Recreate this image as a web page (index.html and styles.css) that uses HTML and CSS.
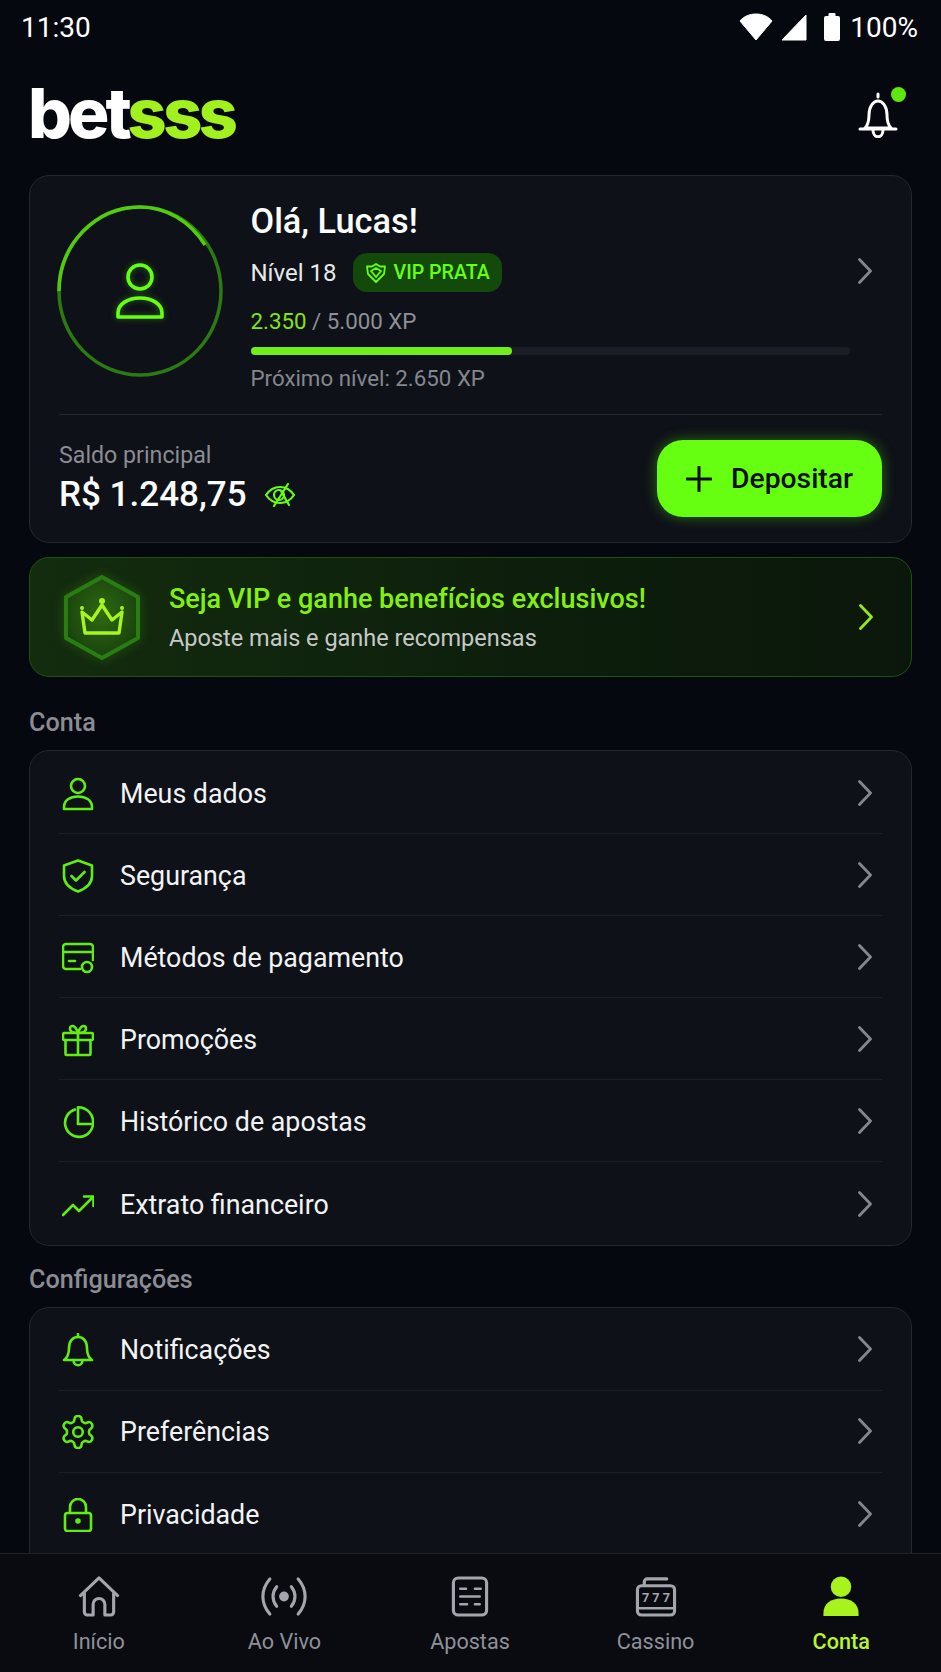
FILE: index.html
```html
<!DOCTYPE html>
<html lang="pt-BR">
<head>
    <meta charset="UTF-8">
    <meta name="viewport" content="width=device-width, initial-scale=1.0">
    <title>Betsss - Conta</title>
    <link rel="stylesheet" href="styles.css">
</head>
<body>
    <div class="screen">
        <main class="content">
            <!-- Status bar -->
            <div class="status-bar">
                <span class="status-time">11:30</span>
                <div class="status-icons">
                    <svg class="wifi" viewBox="0 0 34 28"><path d="M17 1c6 0 12 2 16 7L17 27 1 8c4-5 10-7 16-7z" fill="#fff" stroke="#fff" stroke-linejoin="round"/></svg>
                    <svg class="signal" viewBox="0 0 26 27"><path d="M25 1v25H1z" fill="#fff" stroke="#fff" stroke-linejoin="round"/></svg>
                    <svg class="battery" viewBox="0 0 18 28"><path d="M6.500 0h5a1 1 0 0 1 1 1v2H15a2 2 0 0 1 2 2v21a2 2 0 0 1-2 2H3a2 2 0 0 1-2-2V5a2 2 0 0 1 2-2h2.500V1a1 1 0 0 1 1-1z" fill="#fff"/></svg>
                    <span class="status-pct">100%</span>
                </div>
            </div>

            <!-- Header -->
            <header class="top-header">
                <div class="logo">bet<span>sss</span></div>
                <div class="bell-wrap">
                    <svg class="bell" viewBox="0 0 40 46" fill="none" stroke="#fff" stroke-width="3" stroke-linecap="round" stroke-linejoin="round">
                        <path d="M20 2v3M7 36c3-3 4-6 4-13 0-8 4-14 9-14s9 6 9 14c0 7 1 10 4 13z"/>
                        <path d="M2 37h36"/>
                        <path d="M15 38c0 9 10 9 10 0"/>
                    </svg>
                    <span class="bell-dot"></span>
                </div>
            </header>

            <!-- Profile card -->
            <section class="card profile-card">
                <div class="profile">
                    <div class="avatar">
                        <svg class="avatar-ring" viewBox="0 0 166 172" fill="none">
                            <ellipse cx="83" cy="86" rx="81" ry="84" stroke="#2c7a12" stroke-width="3.5"/>
                            <path d="M2 86C2 40 38 2 83 2c26 0 50 14 65 38" stroke="#52cc10" stroke-width="3.5"/>
                        </svg>
                        <svg class="avatar-person" viewBox="0 0 48 56" fill="none" stroke="#66ff11" stroke-width="3.6" stroke-linejoin="round">
                            <circle cx="24" cy="14" r="12"/>
                            <path d="M2 54v-4c0-9 10-15 22-15s22 6 22 15v4z"/>
                        </svg>
                    </div>
                    <div class="profile-info">
                        <h1 class="greeting">Olá, Lucas!</h1>
                        <div class="level-row">
                            <span class="level">Nível 18</span>
                            <span class="vip-badge">
                                <svg viewBox="0 0 22 22" fill="none" stroke="#66ff11" stroke-width="1.8" stroke-linejoin="round">
                                    <path d="M11 2l4 2.500h5l-1 7.500-8 8-8-8-1-7.500h5z"/>
                                    <path d="M6 9l5 6 5-6-5-3z"/>
                                </svg>
                                VIP PRATA
                            </span>
                        </div>
                        <div class="xp"><span class="xp-now">2.350</span> / 5.000 XP</div>
                        <div class="xp-bar"><div class="xp-fill" style="width: 43.6%"></div></div>
                        <div class="xp-next">Próximo nível: 2.650 XP</div>
                    </div>
                    <svg class="chevron profile-chevron" viewBox="0 0 14 26"><path d="M1.500 1.500L12.500 13 1.500 24.500"/></svg>
                </div>
                <div class="balance-row">
                    <div class="balance">
                        <div class="balance-label">Saldo principal</div>
                        <div class="balance-value">
                            R$ 1.248,75
                            <svg viewBox="0 0 30 24" fill="none" stroke="#66ff11" stroke-width="2.200" stroke-linecap="round" stroke-linejoin="round">
                                <path d="M1 12c4-6 9-8 14-8s10 2 14 8c-4 6-9 8-14 8S5 18 1 12z"/>
                                <circle cx="14" cy="12" r="5"/>
                                <path d="M23 1L9 23M16 8l8 14"/>
                            </svg>
                        </div>
                    </div>
                    <button class="deposit-btn">
                        <svg viewBox="0 0 26 26" stroke="#0b0f0c" stroke-width="3" stroke-linecap="round"><path d="M13 1v24M1 13h24"/></svg>
                        Depositar
                    </button>
                </div>
            </section>

            <!-- VIP banner -->
            <section class="vip-banner">
                <svg class="vip-hex" viewBox="0 0 76 85">
                    <defs>
                        <radialGradient id="hexFill" cx="50%" cy="45%" r="60%">
                            <stop offset="0%" stop-color="#2f6a12"/>
                            <stop offset="100%" stop-color="#173f0d"/>
                        </radialGradient>
                    </defs>
                    <polygon points="38,2 74,22 74,63 38,83 2,63 2,22" fill="url(#hexFill)" stroke="#2a7d12" stroke-width="4" stroke-linejoin="round"/>
                    <g fill="none" stroke="#a6f51e" stroke-width="3.4" stroke-linejoin="round">
                        <path d="M21 58h34l3-21-10 8-10-15-10 15-10-8z"/>
                    </g>
                    <circle cx="38" cy="26" r="3" fill="#a6f51e"/>
                    <circle cx="18" cy="33" r="2" fill="#a6f51e"/>
                    <circle cx="58" cy="33" r="2" fill="#a6f51e"/>
                </svg>
                <div class="vip-text">
                    <div class="vip-title">Seja VIP e ganhe benefícios exclusivos!</div>
                    <div class="vip-sub">Aposte mais e ganhe recompensas</div>
                </div>
                <svg class="chevron vip-chevron" viewBox="0 0 14 26"><path d="M1.500 1.500L12.500 13 1.500 24.500"/></svg>
            </section>

            <h2 class="section-title">Conta</h2>
            <section class="card menu-card">
                <a class="menu-row">
                    <svg class="menu-icon" viewBox="0 0 32 32"><circle cx="16" cy="8" r="7"/><path d="M2 31v-2c0-6.500 6-10.500 14-10.500S30 22.500 30 29v2z"/></svg>
                    <span>Meus dados</span>
                    <svg class="chevron" viewBox="0 0 14 26"><path d="M1.500 1.500L12.500 13 1.500 24.500"/></svg>
                </a>
                <a class="menu-row">
                    <svg class="menu-icon" viewBox="0 0 32 32"><path d="M16 .5L30 5.500V16c0 7.500-6 12.500-14 15.500C8 28.500 2 23.500 2 16V5.500z"/><path d="M9.500 16l4.500 4.500 8.500-8.500"/></svg>
                    <span>Segurança</span>
                    <svg class="chevron" viewBox="0 0 14 26"><path d="M1.500 1.500L12.500 13 1.500 24.500"/></svg>
                </a>
                <a class="menu-row">
                    <svg class="menu-icon" viewBox="0 0 32 32"><path d="M18 27H4a3 3 0 0 1-3-3V5a3 3 0 0 1 3-3h24a3 3 0 0 1 3 3v13"/><path d="M1 10h30M7 19h6"/><circle cx="25" cy="25" r="5"/></svg>
                    <span>Métodos de pagamento</span>
                    <svg class="chevron" viewBox="0 0 14 26"><path d="M1.500 1.500L12.500 13 1.500 24.500"/></svg>
                </a>
                <a class="menu-row">
                    <svg class="menu-icon" viewBox="0 0 32 32"><rect x="1" y="9" width="30" height="7" rx="1.500"/><path d="M3.500 16v14a1 1 0 0 0 1 1h23a1 1 0 0 0 1-1V16M16 9v22"/><path d="M16 9c-3 0-8-1-8-4.500C8 1 13 0 16 9c3-9 8-8 8-4.500S19 9 16 9z"/></svg>
                    <span>Promoções</span>
                    <svg class="chevron" viewBox="0 0 14 26"><path d="M1.500 1.500L12.500 13 1.500 24.500"/></svg>
                </a>
                <a class="menu-row">
                    <svg class="menu-icon" viewBox="0 0 32 32"><path d="M13 3.500A14 14 0 1 0 31 18H16"/><path d="M16 18V1.200A15 15 0 0 1 31 18"/></svg>
                    <span>Histórico de apostas</span>
                    <svg class="chevron" viewBox="0 0 14 26"><path d="M1.500 1.500L12.500 13 1.500 24.500"/></svg>
                </a>
                <a class="menu-row">
                    <svg class="menu-icon" viewBox="0 0 32 32"><path d="M1 26l10-10 6 6L30 9"/><path d="M22 7.500h9.500V17"/></svg>
                    <span>Extrato financeiro</span>
                    <svg class="chevron" viewBox="0 0 14 26"><path d="M1.500 1.500L12.500 13 1.500 24.500"/></svg>
                </a>
            </section>

            <h2 class="section-title section-title-next">Configurações</h2>
            <section class="card menu-card menu-card-last">
                <a class="menu-row">
                    <svg class="menu-icon" viewBox="0 0 32 34"><path d="M16 1v3M2 27c3-2 5-6 5-12 0-7 4-11 9-11s9 4 9 11c0 6 2 10 5 12z"/><path d="M11.500 27c0 7 9 7 9 0"/></svg>
                    <span>Notificações</span>
                    <svg class="chevron" viewBox="0 0 14 26"><path d="M1.500 1.500L12.500 13 1.500 24.500"/></svg>
                </a>
                <a class="menu-row">
                    <svg class="menu-icon menu-icon-gear" viewBox="2 2 20 20"><path d="M12.220 2h-.44a2 2 0 0 0-2 2v.18a2 2 0 0 1-1 1.730l-.43.25a2 2 0 0 1-2 0l-.15-.08a2 2 0 0 0-2.730.73l-.22.38a2 2 0 0 0 .73 2.730l.15.1a2 2 0 0 1 1 1.720v.51a2 2 0 0 1-1 1.740l-.15.09a2 2 0 0 0-.73 2.730l.22.38a2 2 0 0 0 2.730.73l.15-.08a2 2 0 0 1 2 0l.43.25a2 2 0 0 1 1 1.730V20a2 2 0 0 0 2 2h.44a2 2 0 0 0 2-2v-.18a2 2 0 0 1 1-1.730l.43-.25a2 2 0 0 1 2 0l.15.08a2 2 0 0 0 2.730-.73l.22-.39a2 2 0 0 0-.73-2.730l-.15-.08a2 2 0 0 1-1-1.740v-.5a2 2 0 0 1 1-1.740l.15-.09a2 2 0 0 0 .73-2.730l-.22-.38a2 2 0 0 0-2.730-.73l-.15.08a2 2 0 0 1-2 0l-.43-.25a2 2 0 0 1-1-1.730V4a2 2 0 0 0-2-2z"/><circle cx="12" cy="12" r="3"/></svg>
                    <span>Preferências</span>
                    <svg class="chevron" viewBox="0 0 14 26"><path d="M1.500 1.500L12.500 13 1.500 24.500"/></svg>
                </a>
                <a class="menu-row">
                    <svg class="menu-icon" viewBox="0 0 32 34"><rect x="3" y="15" width="26" height="18" rx="2.500"/><path d="M8 15V9a8 8 0 0 1 16 0v6"/><circle cx="16" cy="23" r="1.500"/></svg>
                    <span>Privacidade</span>
                    <svg class="chevron" viewBox="0 0 14 26"><path d="M1.500 1.500L12.500 13 1.500 24.500"/></svg>
                </a>
            </section>
        </main>

        <!-- Bottom navigation -->
        <nav class="bottom-nav">
            <a class="nav-item">
                <svg class="nav-icon" viewBox="0 0 42 42"><path d="M2 20L21 2l19 18"/><path d="M6 18v19a3 3 0 0 0 3 3h6V29a6 6 0 0 1 12 0v11h6a3 3 0 0 0 3-3V18"/></svg>
                <span>Início</span>
            </a>
            <a class="nav-item">
                <svg class="nav-icon" viewBox="0 0 46 42"><circle cx="23" cy="21" r="5" fill="#a4a6ad" stroke="none"/><path d="M15.500 11c-5 6-5 14 0 20M30.500 11c5 6 5 14 0 20"/><path d="M8.500 3c-9.500 11-9.500 25 0 36M37.500 3c9.500 11 9.500 25 0 36"/></svg>
                <span>Ao Vivo</span>
            </a>
            <a class="nav-item">
                <svg class="nav-icon" viewBox="0 0 38 42"><rect x="2" y="2" width="34" height="38" rx="5"/><path d="M9 13h6M24 13h6M9 21h20M9 29h7M24 29h5" stroke-width="2.500"/></svg>
                <span>Apostas</span>
            </a>
            <a class="nav-item">
                <svg class="nav-icon" viewBox="0 0 42 42"><path d="M9 9V6a3 3 0 0 1 3-3h20"/><rect x="2" y="10" width="38" height="30" rx="4"/><path d="M2 33h38" stroke-width="2.500"/><text class="nav-777" x="21" y="27" text-anchor="middle">7 7 7</text></svg>
                <span>Cassino</span>
            </a>
            <a class="nav-item nav-item-active">
                <svg class="nav-icon" viewBox="0 0 38 42"><circle cx="19" cy="11" r="10.500"/><path d="M1 41v-3c0-10 8-15 18-15s18 5 18 15v3z"/></svg>
                <span>Conta</span>
            </a>
        </nav>
    </div>
</body>
</html>
```

FILE: styles.css
```css
* {
    margin: 0;
    padding: 0;
    box-sizing: border-box;
}

body {
    font-family: 'Roboto', 'Liberation Sans', sans-serif;
    background: #060810;
    color: #f4f5f6;
}

.screen {
    width: 941px;
    height: 1672px;
    display: flex;
    flex-direction: column;
    overflow: hidden;
    background: #060810;
}

.content {
    flex: 1;
    overflow: hidden;
    padding: 0 29px 0 29px;
}

/* Status bar */
.status-bar {
    height: 56px;
    margin: 0 -6px 0 -8px;
    display: flex;
    justify-content: space-between;
    align-items: flex-start;
    padding-top: 11px;
}

.status-time, .status-pct {
    font-size: 28px;
    line-height: 34px;
    color: #fff;
}

.status-icons {
    display: flex;
    align-items: flex-start;
    gap: 8px;
}

.wifi {
    width: 34px;
    height: 28px;
    margin-top: 2px;
}

.signal {
    width: 26px;
    height: 27px;
    margin-top: 3px;
}

.battery {
    width: 18px;
    height: 28px;
    margin: 2px 1px 0 8px;
}

/* Header */
.top-header {
    height: 119px;
    display: flex;
    justify-content: space-between;
    align-items: flex-start;
}

.logo {
    font-family: 'Inter', sans-serif;
    font-weight: 800;
    font-size: 69px;
    line-height: 84px;
    letter-spacing: -4px;
    color: #fff;
    margin-top: 15px;
    margin-left: -1px;
}

.logo span {
    color: #a2f01e;
}

.bell-wrap {
    position: relative;
    width: 40px;
    height: 46px;
    margin: 36px 14px 0 0;
}

.bell {
    width: 40px;
    height: 46px;
}

.bell-dot {
    position: absolute;
    right: -8px;
    top: -5px;
    width: 15px;
    height: 15px;
    border-radius: 50%;
    background: #5fe80f;
}

/* Cards */
.card {
    background: #0e1118;
    border: 1.5px solid #23272f;
    border-radius: 20px;
}

.profile-card {
    height: 368px;
}

.profile {
    display: flex;
    height: 239px;
    margin: 0 29px;
    padding-top: 25px;
    border-bottom: 1.5px solid #23272f;
}

.avatar {
    position: relative;
    flex: 0 0 166px;
    height: 172px;
    margin: 4px 27.5px 0 -2px;
    display: flex;
    align-items: center;
    justify-content: center;
}

.avatar-ring {
    position: absolute;
    inset: 0;
    width: 166px;
    height: 172px;
}

.avatar-person {
    width: 48px;
    height: 56px;
    filter: drop-shadow(0 0 3px rgba(102, 255, 17, 0.35));
}

.profile-info {
    flex: 0 0 599px;
}

.greeting {
    font-size: 34.300px;
    font-weight: 500;
    line-height: 40px;
    color: #fbfcfc;
}

.level-row {
    display: flex;
    align-items: center;
    gap: 16px;
    height: 39px;
    margin-top: 12px;
}

.level {
    font-size: 24px;
    color: #e8e9eb;
}

.vip-badge {
    display: flex;
    align-items: center;
    gap: 7px;
    height: 39px;
    padding: 0 12px;
    border-radius: 14px;
    background: #134a0c;
    color: #66ff11;
    font-size: 19.600px;
    font-weight: 500;
}

.vip-badge svg {
    width: 22px;
    height: 22px;
}

.xp {
    margin-top: 14px;
    font-size: 22.300px;
    line-height: 30px;
    color: #8e9097;
}

.xp-now {
    color: #84e512;
}

.xp-bar {
    height: 7.500px;
    margin-top: 11px;
    border-radius: 4px;
    background: #1b1e26;
}

.xp-fill {
    height: 100%;
    border-radius: 4px;
    background: #70ee1a;
}

.xp-next {
    margin-top: 8px;
    font-size: 22.300px;
    line-height: 30px;
    color: #85878e;
}

.chevron {
    flex: none;
    width: 14px;
    height: 26px;
    fill: none;
    stroke: #84878d;
    stroke-width: 2.800;
    stroke-linecap: round;
    stroke-linejoin: round;
}

.profile-chevron {
    margin: 57px 0 0 8px;
}

.balance-row {
    display: flex;
    justify-content: space-between;
    margin: 0 29px;
    padding-top: 25px;
}

.balance-label {
    margin-top: 1px;
    font-size: 23.200px;
    line-height: 28px;
    color: #8a8c93;
}

.balance-value {
    display: flex;
    align-items: center;
    gap: 18px;
    margin-top: 6px;
    font-size: 35px;
    font-weight: 500;
    line-height: 40px;
    color: #fbfcfc;
}

.balance-value svg {
    width: 30px;
    height: 24px;
}

.deposit-btn {
    display: flex;
    align-items: center;
    gap: 19px;
    width: 225px;
    height: 77px;
    padding-left: 29px;
    border: none;
    border-radius: 26px;
    background: #66ff11;
    box-shadow: 0 0 14px rgba(102, 255, 17, 0.38);
    color: #0b0f0c;
    font-family: inherit;
    font-size: 28.300px;
    font-weight: 500;
}

.deposit-btn svg {
    width: 26px;
    height: 26px;
}

/* VIP banner */
.vip-banner {
    display: flex;
    align-items: center;
    height: 120px;
    margin-top: 14px;
    padding: 0 38px 0 34px;
    border: 1.5px solid #1e5210;
    border-radius: 20px;
    background: linear-gradient(90deg, #132c0e 0%, #0d1f0c 55%, #0b170b 100%);
}

.vip-hex {
    flex: none;
    width: 76px;
    height: 85px;
    margin-right: 29px;
    filter: drop-shadow(0 0 6px rgba(102, 255, 17, 0.18));
}

.vip-text {
    flex: 1;
    padding-top: 2px;
}

.vip-title {
    font-size: 27px;
    font-weight: 500;
    line-height: 34px;
    color: #84f00f;
}

.vip-sub {
    margin-top: 6px;
    font-size: 23.500px;
    line-height: 32px;
    color: #c6c9c6;
}

.vip-chevron {
    stroke: #97ea17;
}

/* Menu lists */
.section-title {
    margin-top: 31px;
    font-size: 25.200px;
    font-weight: 500;
    line-height: 30px;
    color: #8b8d94;
}

.section-title-next {
    margin-top: 19px;
}

.menu-card {
    margin-top: 12px;
    padding-top: 1px;
}

.menu-card-last {
    padding-bottom: 40px;
}

.menu-row {
    display: flex;
    align-items: center;
    gap: 26px;
    height: 82.100px;
    margin: 0 29px;
    padding: 2px 10px 0 3px;
    border-bottom: 1.5px solid #1c1f27;
    font-size: 26.800px;
    color: #f2f3f4;
}

.menu-row:last-child {
    border-bottom: none;
}

.menu-row span {
    flex: 1;
}

.menu-row .chevron {
    margin-top: -2px;
}

.menu-icon {
    flex: none;
    width: 32px;
    height: 34px;
    fill: none;
    stroke: #5fee10;
    stroke-width: 2.600;
    stroke-linecap: round;
    stroke-linejoin: round;
}

.menu-icon-gear {
    stroke-width: 1.600;
}

/* Bottom navigation */
.bottom-nav {
    flex: 0 0 119px;
    display: grid;
    grid-template-columns: repeat(5, 1fr);
    padding: 22px 7px 0 6px;
    border-top: 1.5px solid #1f2229;
    background: #090b11;
}

.nav-item {
    display: flex;
    flex-direction: column;
    align-items: center;
    font-size: 21.600px;
    line-height: 30px;
    color: #8f9198;
}

.nav-item span {
    margin-top: 10px;
}

.nav-icon {
    height: 41px;
    width: 46px;
    fill: none;
    stroke: #a4a6ad;
    stroke-width: 3.200;
    stroke-linecap: round;
    stroke-linejoin: round;
}

.nav-777 {
    font-family: 'Roboto', sans-serif;
    font-size: 13px;
    font-weight: 700;
    fill: #a4a6ad;
    stroke: none;
}

.nav-item-active {
    color: #bcf42a;
    font-weight: 500;
}

.nav-item-active .nav-icon {
    fill: #a8f21e;
    stroke: none;
}
```
